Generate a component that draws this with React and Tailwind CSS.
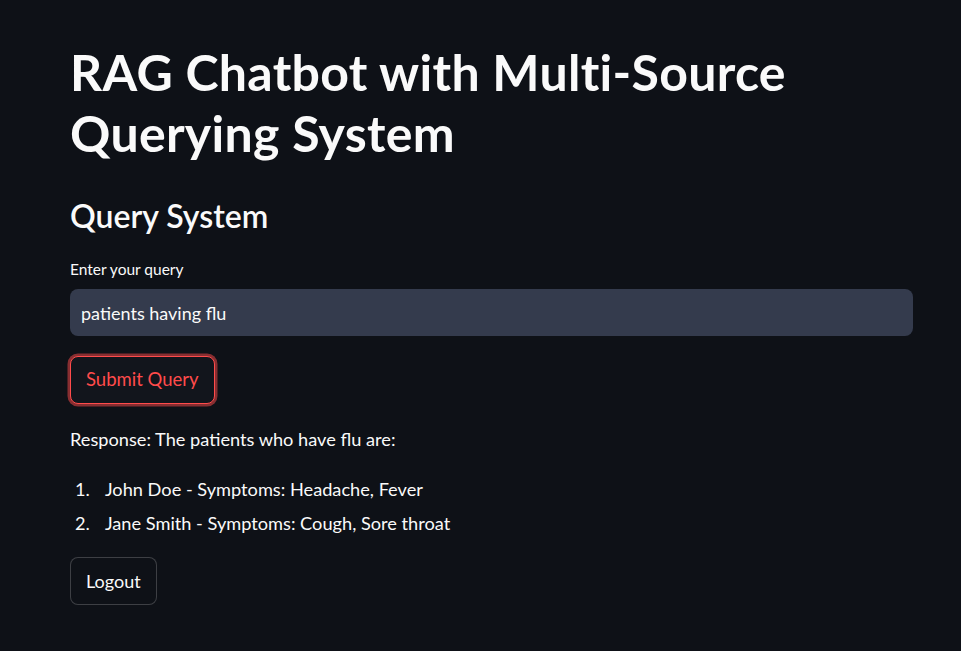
import React, { useState } from 'react';

const FONT = { fontFamily: 'Lato, "Noto Sans", sans-serif' };

export default function App() {
  const [query, setQuery] = useState('patients having flu');

  return (
    <div className="min-h-screen w-full bg-[#0e1117] text-[#fafafa]" style={FONT}>
      <main className="pl-[70px] pt-[42px] pb-10 w-[913px] box-content">
        <h1 className="text-[50px] leading-[61px] font-bold tracking-[0.3px]">
          RAG Chatbot with Multi-Source
          <br />
          Querying System
        </h1>

        <h2 className="mt-[32px] text-[32px] leading-[40px] font-semibold">Query System</h2>

        <label className="block mt-[23px] text-[15.5px] leading-[20px]">Enter your query</label>
        <input
          value={query}
          onChange={(e) => setQuery(e.target.value)}
          className="mt-[10px] w-[843px] h-[47px] rounded-lg bg-[#343b4d] px-[11px] text-[18px] text-[#fafafa] outline-none"
        />

        <button className="block mt-[20px] h-[48px] px-[15px] rounded-lg border border-[#ff4b4b] bg-[#12151c] text-[#ff4b4b] text-[18.5px] shadow-[0_0_0_2.5px_rgba(255,75,75,0.5)]">
          Submit Query
        </button>

        <p className="mt-[22px] text-[18.2px] leading-[26px]">Response: The patients who have flu are:</p>

        <ol className="mt-[24px] text-[18.2px] leading-[26px] space-y-[8px]">
          <li className="flex">
            <span className="w-[35px] pl-[5px]">1.</span>
            <span>John Doe - Symptoms: Headache, Fever</span>
          </li>
          <li className="flex">
            <span className="w-[35px] pl-[5px]">2.</span>
            <span>Jane Smith - Symptoms: Cough, Sore throat</span>
          </li>
        </ol>

        <button className="block mt-[21px] h-[48px] px-[15px] rounded-lg border border-[#fafafa33] bg-[#0e1117] text-[18px]">
          Logout
        </button>
      </main>
    </div>
  );
}
